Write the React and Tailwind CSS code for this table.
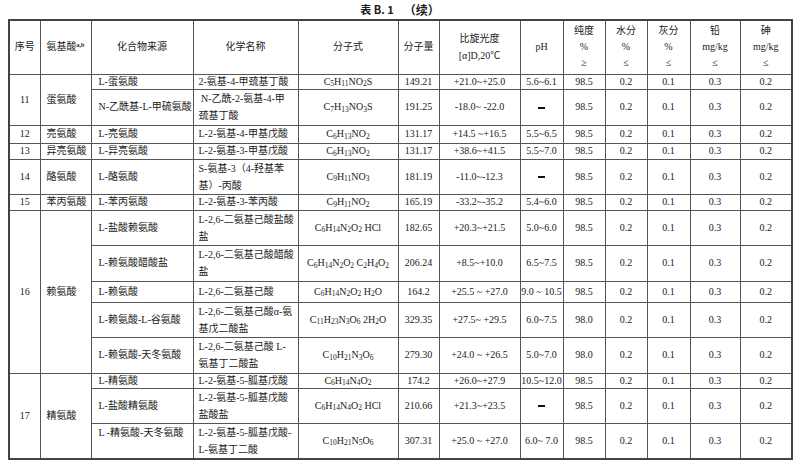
const rows = [
  { no: "11", acid: "蛋氨酸", span: 2, h: "h-[15px]", src: "L-蛋氨酸", name: "2-氨基-4-甲巯基丁酸", f: <>C<sub>5</sub>H<sub>11</sub>NO<sub>2</sub>S</>, mw: "149.21", rot: "+21.0~+25.0", ph: "5.6~6.1", pur: "98.5" },
  { h: "h-[36px]", src: "N-乙酰基-L-甲硫氨酸", name: ["\u00a0N-乙酰-2-氨基-4-甲", "巯基丁酸"], f: <>C<sub>7</sub>H<sub>13</sub>NO<sub>3</sub>S</>, mw: "191.25", rot: "-18.0~ -22.0", ph: null, pur: "98.5" },
  { no: "12", acid: "亮氨酸", span: 1, h: "h-[18px]", src: "L-亮氨酸", name: "L-2-氨基-4-甲基戊酸", f: <>C<sub>6</sub>H<sub>13</sub>NO<sub>2</sub></>, mw: "131.17", rot: "+14.5 ~+16.5", ph: "5.5~6.5", pur: "98.5" },
  { no: "13", acid: "异亮氨酸", span: 1, h: "h-[16px]", src: "L-异亮氨酸", name: "L-2-氨基-3-甲基戊酸", f: <>C<sub>6</sub>H<sub>13</sub>NO<sub>2</sub></>, mw: "131.17", rot: "+38.6~+41.5", ph: "5.5~7.0", pur: "98.5" },
  { no: "14", acid: "酪氨酸", span: 1, h: "h-[35px]", src: "L-酪氨酸", name: ["S-氨基-3（4-羟基苯", "基）-丙酸"], f: <>C<sub>9</sub>H<sub>11</sub>NO<sub>3</sub></>, mw: "181.19", rot: "-11.0~-12.3", ph: null, pur: "98.5" },
  { no: "15", acid: "苯丙氨酸", span: 1, h: "h-[16px]", src: "L-苯丙氨酸", name: "L-2-氨基-3-苯丙酸", f: <>C<sub>9</sub>H<sub>11</sub>NO<sub>2</sub></>, mw: "165.19", rot: "-33.2~-35.2", ph: "5.4~6.0", pur: "98.5" },
  { no: "16", acid: "赖氨酸", span: 5, h: "h-[35px]", src: "L-盐酸赖氨酸", name: ["L-2,6-二氨基己酸盐酸", "盐"], f: <>C<sub>6</sub>H<sub>14</sub>N<sub>2</sub>O<sub>2</sub> HCl</>, mw: "182.65", rot: "+20.3~+21.5", ph: "5.0~6.0", pur: "98.5" },
  { h: "h-[36px]", src: "L-赖氨酸醋酸盐", name: ["L-2,6-二氨基己酸醋酸", "盐"], f: <>C<sub>6</sub>H<sub>14</sub>N<sub>2</sub>O<sub>2</sub> C<sub>2</sub>H<sub>4</sub>O<sub>2</sub></>, mw: "206.24", rot: "+8.5~+10.0", ph: "6.5~7.5", pur: "98.5" },
  { h: "h-[21px]", src: "L-赖氨酸", name: "L-2,6-二氨基己酸", f: <>C<sub>6</sub>H<sub>14</sub>N<sub>2</sub>O<sub>2</sub> H<sub>2</sub>O</>, mw: "164.2", rot: "+25.5 ~ +27.0", ph: "9.0 ~ 10.5", pur: "98.5" },
  { h: "h-[34px]", src: "L-赖氨酸-L-谷氨酸", name: ["L-2,6-二氨基己酸α-氨", "基戊二酸盐"], f: <>C<sub>11</sub>H<sub>23</sub>N<sub>3</sub>O<sub>6</sub> 2H<sub>2</sub>O</>, mw: "329.35", rot: "+27.5~ +29.5", ph: "6.0~7.5", pur: "98.0" },
  { h: "h-[36px]", src: "L-赖氨酸-天冬氨酸", name: ["L-2,6-二氨基己酸 L-", "氨基丁二酸盐"], f: <>C<sub>10</sub>H<sub>21</sub>N<sub>3</sub>O<sub>6</sub></>, mw: "279.30", rot: "+24.0 ~ +26.5", ph: "5.0~7.0", pur: "98.0" },
  { no: "17", acid: "精氨酸", span: 3, h: "h-[15px]", src: "L-精氨酸", name: "L-2-氨基-5-胍基戊酸", f: <>C<sub>6</sub>H<sub>14</sub>N<sub>4</sub>O<sub>2</sub></>, mw: "174.2", rot: "+26.0~+27.9", ph: "10.5~12.0", pur: "98.5" },
  { h: "h-[35px]", src: "L-盐酸精氨酸", name: ["L-2-氨基-5-胍基戊酸", "盐酸盐"], f: <>C<sub>6</sub>H<sub>14</sub>N<sub>4</sub>O<sub>2</sub> HCl</>, mw: "210.66", rot: "+21.3~+23.5", ph: null, pur: "98.5" },
  { h: "h-[35px]", src: "L -精氨酸-天冬氨酸", srcTop: true, name: ["L-2-氨基-5-胍基戊酸-", "L-氨基丁二酸"], f: <>C<sub>10</sub>H<sub>21</sub>N<sub>5</sub>O<sub>6</sub></>, mw: "307.31", rot: "+25.0 ~ +27.0", ph: "6.0~ 7.0", pur: "98.5" },
];

const cell = "border border-[#555] p-0";

function Lines({ value }) {
  if (Array.isArray(value)) {
    return (
      <div className="leading-[17px]">
        {value.map((l, i) => (
          <div key={i} className="whitespace-nowrap">{l}</div>
        ))}
      </div>
    );
  }
  return <span className="whitespace-nowrap">{value}</span>;
}

function Dash() {
  return <span className="inline-block h-[2px] w-[7px] bg-[#111] align-middle" />;
}

export default function App() {
  return (
    <div className="h-[463px] w-[800px] bg-white font-['Liberation_Serif','Noto_Sans_CJK_SC',serif] text-[10px] text-[#1a1a1a]">
      <div className="flex h-[19px] items-center justify-center gap-[10px] text-[11px] font-bold">
        <span className="font-['Noto_Sans_CJK_SC',sans-serif]">表 B. 1</span>
        <span className="font-['Noto_Sans_CJK_SC',sans-serif] text-[12px]">（续）</span>
      </div>
      <table className="ml-[8px] w-[783px] table-fixed border-collapse border-2 border-[#444] leading-[14px]">
        <colgroup>
          <col className="w-[31px]" />
          <col className="w-[51px]" />
          <col className="w-[102px]" />
          <col className="w-[105px]" />
          <col className="w-[100px]" />
          <col className="w-[41px]" />
          <col className="w-[81px]" />
          <col className="w-[43px]" />
          <col className="w-[42px]" />
          <col className="w-[42px]" />
          <col className="w-[43px]" />
          <col className="w-[50px]" />
          <col className="w-[52px]" />
        </colgroup>
        <thead>
          <tr className="h-[54px] text-center">
            <th className={`${cell} font-normal`}>序号</th>
            <th className={`${cell} pl-[6px] text-left font-normal`}>
              氨基酸<sup className="text-[6px] font-bold">a,b</sup>
            </th>
            <th className={`${cell} font-normal`}>化合物来源</th>
            <th className={`${cell} font-normal`}>化学名称</th>
            <th className={`${cell} font-normal`}>分子式</th>
            <th className={`${cell} font-normal`}>分子量</th>
            <th className={`${cell} font-normal`}>
              <Lines value={["比旋光度", "[α]D,20℃"]} />
            </th>
            <th className={`${cell} font-normal`}>pH</th>
            <th className={`${cell} font-normal leading-[16px]`}>
              纯度<br />%<br />≥
            </th>
            <th className={`${cell} font-normal leading-[16px]`}>
              水分<br />%<br />≤
            </th>
            <th className={`${cell} font-normal leading-[16px]`}>
              灰分<br />%<br />≤
            </th>
            <th className={`${cell} font-normal leading-[16px]`}>
              铅<br />mg/kg<br />≤
            </th>
            <th className={`${cell} font-normal leading-[16px]`}>
              砷<br />mg/kg<br />≤
            </th>
          </tr>
        </thead>
        <tbody>
          {rows.map((r, i) => (
            <tr key={i} className={`${r.h} text-center`}>
              {r.no && (
                <>
                  <td rowSpan={r.span} className={cell}>{r.no}</td>
                  <td rowSpan={r.span} className={`${cell} pl-[6px] text-left`}>{r.acid}</td>
                </>
              )}
              <td className={`${cell} pl-[7px] text-left ${r.srcTop ? "align-top pt-[2px]" : ""}`}>
                <span className="whitespace-nowrap">{r.src}</span>
              </td>
              <td className={`${cell} pl-[5px] text-left`}>
                <Lines value={r.name} />
              </td>
              <td className={`${cell} whitespace-nowrap`}>{r.f}</td>
              <td className={cell}>{r.mw}</td>
              <td className={`${cell} whitespace-nowrap`}>{r.rot}</td>
              <td className={`${cell} whitespace-nowrap`}>{r.ph ?? <Dash />}</td>
              <td className={cell}>{r.pur}</td>
              <td className={cell}>0.2</td>
              <td className={cell}>0.1</td>
              <td className={cell}>0.3</td>
              <td className={cell}>0.2</td>
            </tr>
          ))}
        </tbody>
      </table>
    </div>
  );
}
